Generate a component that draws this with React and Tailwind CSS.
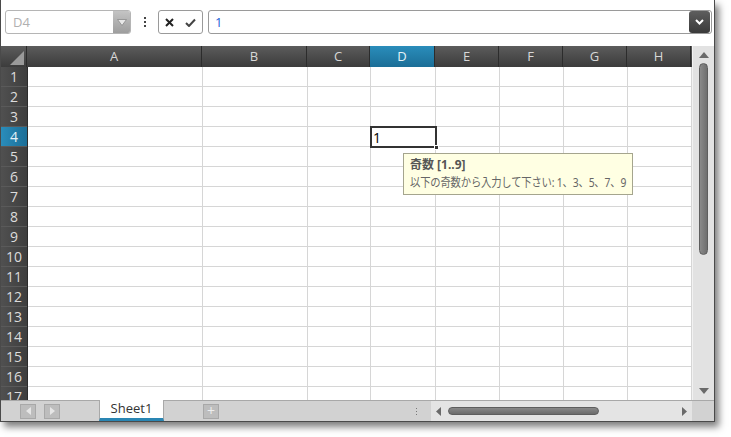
import React from "react";

const cols = [
  { l: "A", w: 175 },
  { l: "B", w: 105 },
  { l: "C", w: 63 },
  { l: "D", w: 65 },
  { l: "E", w: 64 },
  { l: "F", w: 64 },
  { l: "G", w: 64 },
  { l: "H", w: 64 },
];
const rows = Array.from({ length: 17 }, (_, i) => i + 1);

export default function App() {
  return (
    <div
      className="w-[731px] h-[437px] bg-white overflow-hidden"
      style={{ fontFamily: '"Open Sans", "Noto Sans", "Noto Sans CJK JP", sans-serif' }}
    >
      <div className="relative w-[715px] h-[422px] border-l border-r border-b border-[#4a4a4a] bg-white shadow-[4px_5px_7px_rgba(0,0,0,0.5)] flex flex-col">
        {/* Toolbar */}
        <div className="h-[46px] shrink-0 flex items-start pt-[10px] pl-[4px] pr-[2px]">
          <div className="w-[126px] h-[24px] border border-[#b5b5b5] rounded-[3px] flex overflow-hidden">
            <div className="flex-1 text-[13px] text-[#b0b0b0] pl-[7px] leading-[22px]">D4</div>
            <div className="w-[17px] h-full bg-gradient-to-b from-[#c4c4c4] to-[#9e9e9e] flex items-center justify-center">
              <svg width="10" height="7" viewBox="0 0 10 7">
                <path d="M0.5 0.5 H9.5 L5 6.5 Z" fill="#e8e8e8" stroke="#8a8a8a" strokeWidth="0.8" />
              </svg>
            </div>
          </div>
          <div className="w-[27px] h-[24px] flex flex-col items-center justify-center gap-[2px]">
            <div className="w-[2px] h-[2px] bg-[#444]" />
            <div className="w-[2px] h-[2px] bg-[#444]" />
            <div className="w-[2px] h-[2px] bg-[#444]" />
          </div>
          <div className="w-[45px] h-[24px] border border-[#9a9a9a] rounded-[3px] flex items-center justify-between px-[6px]">
            <svg width="9" height="9" viewBox="0 0 9 9">
              <path d="M1 1 L8 8 M8 1 L1 8" stroke="#222" strokeWidth="2" />
            </svg>
            <svg width="11" height="9" viewBox="0 0 11 9">
              <path d="M1 5 L4 8 L10 1.5" stroke="#444" strokeWidth="2" fill="none" />
            </svg>
          </div>
          <div className="ml-[5px] flex-1 h-[24px] border border-[#9a9a9a] rounded-[3px] flex items-center pr-[1px]">
            <div className="flex-1 pl-[6px] text-[13px] text-[#1f5fd6] leading-[22px]">1</div>
            <div className="w-[21px] h-[22px] rounded-[3px] bg-gradient-to-b from-[#5e5e5e] to-[#3a3a3a] flex items-center justify-center">
              <svg width="9" height="6" viewBox="0 0 9 6">
                <path d="M1 1 L4.5 4.5 L8 1" stroke="#fff" strokeWidth="2" fill="none" />
              </svg>
            </div>
          </div>
        </div>

        {/* Grid area */}
        <div className="flex-1 flex min-h-0">
          <div className="relative flex-1 flex flex-col min-w-0 overflow-hidden">
            {/* column header */}
            <div className="h-[21px] shrink-0 flex bg-gradient-to-b from-[#5c5c5c] to-[#3c3c3c]">
              <div className="w-[26px] h-full border-r border-[#2c2c2c] relative">
                <svg className="absolute right-[2px] bottom-[2px]" width="14" height="14" viewBox="0 0 14 14">
                  <path d="M14 0 L14 14 L0 14 Z" fill="#9a9a9a" />
                </svg>
              </div>
              {cols.map((c) => (
                <div
                  key={c.l}
                  style={{ width: c.w }}
                  className={
                    "h-full shrink-0 border-r border-[#2c2c2c] flex items-center justify-center text-[13px] " +
                    (c.l === "D"
                      ? "bg-gradient-to-b from-[#2a8dbb] to-[#1b6e97] text-[#e6f2f8]"
                      : "text-[#d8d8d8]")
                  }
                >
                  {c.l}
                </div>
              ))}
            </div>
            {/* rows */}
            <div className="flex-1 flex flex-col overflow-hidden">
              {rows.map((r) => (
                <div key={r} className="h-[20px] shrink-0 flex">
                  <div
                    className={
                      "w-[26px] h-full shrink-0 border-b border-[#5a5a5a] flex items-center justify-center text-[14px] " +
                      (r === 4
                        ? "bg-gradient-to-r from-[#2a8dbb] to-[#1b6e97] text-[#e6f2f8]"
                        : "bg-gradient-to-r from-[#505050] to-[#3e3e3e] text-[#dcdcdc]")
                    }
                  >
                    {r}
                  </div>
                  <div className="w-px h-full bg-[#2c2c2c] shrink-0" />
                  {cols.map((c) => (
                    <div
                      key={c.l}
                      style={{ width: c.w }}
                      className="h-full shrink-0 border-r border-b border-[#d6d6d6]"
                    />
                  ))}
                </div>
              ))}
            </div>

            {/* selection */}
            <div className="absolute left-[369px] top-[80px] w-[67px] h-[22px] border-2 border-[#333] text-[14px] leading-[20px] pl-[1px] text-[#000]">
              1
              <div className="absolute right-[-4px] bottom-[-4px] w-[5px] h-[5px] bg-[#333] border border-white" />
            </div>

            {/* tooltip */}
            <div
              className="absolute left-[402px] top-[107px] w-[230px] h-[42px] bg-[#ffffe3] border border-[#a5a58e] px-[6px] pt-[2px] text-[12px] leading-[18px] overflow-hidden"
              style={{ fontFamily: '"Noto Sans", "Noto Sans CJK JP", sans-serif' }}
            >
              <div className="font-bold text-[#555]">奇数 [1..9]</div>
              <div className="text-[#666] whitespace-nowrap tracking-[-0.2px] origin-left scale-x-[0.86]">以下の奇数から入力して下さい: 1、3、5、7、9</div>
            </div>
          </div>

          {/* vertical scrollbar */}
          <div className="w-[22px] shrink-0 bg-[#e2e2e2] border-l border-[#f2f2f2] flex flex-col items-center">
            <div className="h-[16px] w-full flex items-center justify-center pt-[2px]">
              <svg width="10" height="6" viewBox="0 0 10 6">
                <path d="M5 0 L10 6 L0 6 Z" fill="#6a6a6a" />
              </svg>
            </div>
            <div className="w-[9px] h-[192px] mt-[1px] rounded-[5px] bg-gradient-to-r from-[#8a8a8a] to-[#6f6f6f] border border-[#5e5e5e]" />
            <div className="flex-1" />
            <div className="h-[18px] w-full flex items-center justify-center">
              <svg width="10" height="6" viewBox="0 0 10 6">
                <path d="M0 0 L10 0 L5 6 Z" fill="#6a6a6a" />
              </svg>
            </div>
          </div>
        </div>

        {/* Tab bar */}
        <div className="h-[21px] shrink-0 flex bg-[#d2d2d2] border-t border-[#a8a8a8]">
          <div className="w-[98px] shrink-0 flex items-center pl-[19px] gap-[8px]">
            <div className="w-[16px] h-[15px] bg-[#bdbdbd] border border-[#a8a8a8] flex items-center justify-center">
              <svg width="5" height="8" viewBox="0 0 5 8"><path d="M5 0 L5 8 L0 4 Z" fill="#e6e6e6" /></svg>
            </div>
            <div className="w-[16px] h-[15px] bg-[#bdbdbd] border border-[#a8a8a8] flex items-center justify-center">
              <svg width="5" height="8" viewBox="0 0 5 8"><path d="M0 0 L5 4 L0 8 Z" fill="#e6e6e6" /></svg>
            </div>
          </div>
          <div className="w-[65px] -mt-px h-[21px] shrink-0 bg-white border-l border-r border-[#a8a8a8] border-b-[3px] border-b-[#2a86b3] flex items-center justify-center text-[13px] text-[#333]">
            Sheet1
          </div>
          <div className="w-[267px] shrink-0 flex items-center">
            <div className="ml-[39px] w-[16px] h-[15px] bg-[#bdbdbd] border border-[#a8a8a8] flex items-center justify-center text-[#eee] text-[14px] leading-none">
              +
            </div>
            <div className="flex-1" />
            <div className="mr-[14px] flex flex-col gap-[2px]">
              <div className="w-px h-px bg-[#777]" />
              <div className="w-px h-px bg-[#777]" />
              <div className="w-px h-px bg-[#777]" />
            </div>
          </div>
          <div className="flex-1 bg-[#e4e4e4] flex items-center px-[5px]">
            <svg width="5" height="9" viewBox="0 0 5 9"><path d="M5 0 L5 9 L0 4.5 Z" fill="#6a6a6a" /></svg>
            <div className="ml-[7px] w-[151px] h-[8px] rounded-[4px] bg-gradient-to-b from-[#888] to-[#6c6c6c] border border-[#5e5e5e]" />
            <div className="flex-1" />
            <svg width="5" height="9" viewBox="0 0 5 9"><path d="M0 0 L5 4.5 L0 9 Z" fill="#6a6a6a" /></svg>
          </div>
          <div className="w-[22px] shrink-0 bg-[#d2d2d2]" />
        </div>
      </div>
    </div>
  );
}
